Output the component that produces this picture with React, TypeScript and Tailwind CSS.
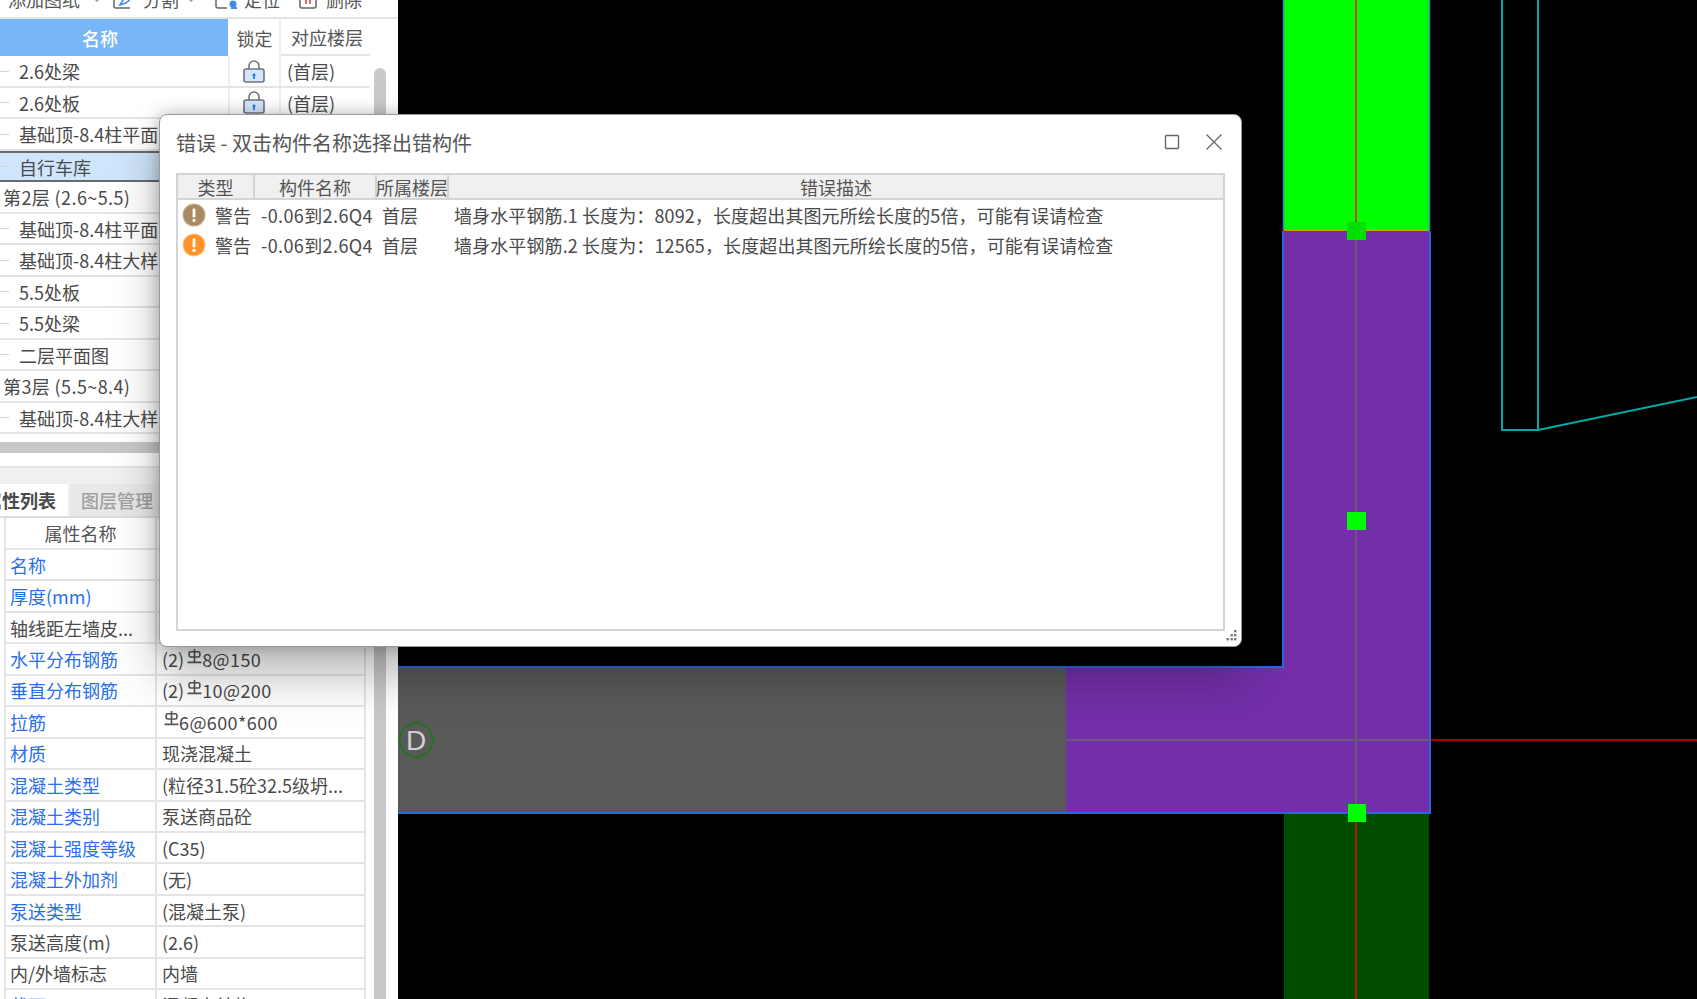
const treeRows = [
  { name: "2.6处梁", indent: true, selected: false },
  { name: "2.6处板", indent: true, selected: false },
  { name: "基础顶-8.4柱平面图", indent: true, selected: false },
  { name: "自行车库", indent: true, selected: true },
  { name: "第2层 (2.6~5.5)", indent: false, selected: false },
  { name: "基础顶-8.4柱平面图", indent: true, selected: false },
  { name: "基础顶-8.4柱大样图", indent: true, selected: false },
  { name: "5.5处板", indent: true, selected: false },
  { name: "5.5处梁", indent: true, selected: false },
  { name: "二层平面图", indent: true, selected: false },
  { name: "第3层 (5.5~8.4)", indent: false, selected: false },
  { name: "基础顶-8.4柱大样图", indent: true, selected: false },
];

// rebar = name is blue, grade = value starts with the rebar symbol
const attrRows: { name: string; blue: boolean; prefix?: string; rebar?: string; value?: string }[] = [
  { name: "名称", blue: true },
  { name: "厚度(mm)", blue: true },
  { name: "轴线距左墙皮...", blue: false },
  { name: "水平分布钢筋", blue: true, prefix: "(2)", rebar: "8@150" },
  { name: "垂直分布钢筋", blue: true, prefix: "(2)", rebar: "10@200" },
  { name: "拉筋", blue: true, prefix: "", rebar: "6@600*600" },
  { name: "材质", blue: true, value: "现浇混凝土" },
  { name: "混凝土类型", blue: true, value: "(粒径31.5砼32.5级坍..." },
  { name: "混凝土类别", blue: true, value: "泵送商品砼" },
  { name: "混凝土强度等级", blue: true, value: "(C35)" },
  { name: "混凝土外加剂", blue: true, value: "(无)" },
  { name: "泵送类型", blue: true, value: "(混凝土泵)" },
  { name: "泵送高度(m)", blue: false, value: "(2.6)" },
  { name: "内/外墙标志", blue: false, value: "内墙" },
  { name: "截面", blue: true, value: "混凝土结构" },
];

const errors = [
  { color: "#a98a62", ring: "#c9b294", desc: "墙身水平钢筋.1 长度为：8092，长度超出其图元所绘长度的5倍，可能有误请检查" },
  { color: "#ff9228", ring: "#ffc48a", desc: "墙身水平钢筋.2 长度为：12565，长度超出其图元所绘长度的5倍，可能有误请检查" },
];

function LockIcon() {
  return (
    <svg width="24" height="24" viewBox="0 0 24 24" fill="none" className="-ml-[2px]">
      <path d="M7 11V7a5 5 0 0 1 10 0v4" stroke="#6d7480" strokeWidth="1.6" />
      <rect x="2" y="10" width="20" height="13" rx="2" fill="#d5e6fb" stroke="#6d7480" strokeWidth="1.6" />
      <path d="M12 14l2.2 2.4h-1.3V20h-1.8v-3.6H9.8z" fill="#1f7ae0" />
    </svg>
  );
}

function RebarSymbol() {
  return (
    <svg width="15" height="15" viewBox="0 0 14 14" fill="none" className="mb-[6px] shrink-0" stroke="#555" strokeWidth="1.5">
      <rect x="2" y="2.5" width="10" height="5" rx="1.5" />
      <path d="M7 0v12M0.5 12.5h13" />
    </svg>
  );
}

function WarnIcon({ color, ring }: { color: string; ring: string }) {
  return (
    <svg width="24" height="24" viewBox="0 0 24 24" className="shrink-0">
      <circle cx="12" cy="12" r="11.5" fill={ring} />
      <circle cx="12" cy="12" r="10.5" fill={color} />
      <rect x="10.6" y="5.5" width="2.8" height="9" rx="1.2" fill="#fff" />
      <circle cx="12" cy="17.3" r="1.6" fill="#fff" />
    </svg>
  );
}

function Toolbar() {
  return (
    <div className="h-[19px] overflow-hidden border-b-2 border-[#e4e4e4] shrink-0">
      <div className="flex items-start -mt-[10px] h-[18px] leading-[18px] whitespace-nowrap text-[#555]">
        <span className="ml-[8px]">添加图纸</span>
        <span className="ml-[13px] mt-[8px] w-0 h-0 border-x-[4px] border-x-transparent border-t-[4px] border-t-[#999]" />
        <svg width="24" height="20" viewBox="0 0 24 20" fill="none" className="ml-[12px]">
          <path d="M1 5v11a2 2 0 0 0 2 2h14" stroke="#666" strokeWidth="1.5" />
          <path d="M7 15l3-5 9-8 3 3-9 8z" stroke="#3f8be8" strokeWidth="1.5" />
        </svg>
        <span className="ml-[6px]">分割</span>
        <span className="ml-[8px] mt-[8px] w-0 h-0 border-x-[4px] border-x-transparent border-t-[4px] border-t-[#999]" />
        <svg width="24" height="20" viewBox="0 0 24 20" fill="none" className="ml-[20px]">
          <path d="M1 4v12a2 2 0 0 0 2 2h9" stroke="#666" strokeWidth="1.5" />
          <circle cx="18" cy="14" r="3.5" fill="#3f8be8" />
          <path d="M16 18h6" stroke="#3f8be8" strokeWidth="2" />
        </svg>
        <span className="ml-[5px]">定位</span>
        <svg width="18" height="20" viewBox="0 0 18 20" fill="none" className="ml-[19px]">
          <path d="M1 4v12a2 2 0 0 0 2 2h12a2 2 0 0 0 2-2V4" stroke="#666" strokeWidth="1.5" />
          <path d="M7 9v5M11 9v5" stroke="#e0483a" strokeWidth="1.6" />
        </svg>
        <span className="ml-[9px]">删除</span>
      </div>
    </div>
  );
}

function TreeTable() {
  return (
    <div className="flex shrink-0 h-[423px]">
      <div className="w-[370px]">
        <div className="flex h-[37px]">
          <div className="w-[228px] bg-[#79b6f8] text-white font-medium flex items-center justify-center pr-[28px]">名称</div>
          <div className="w-[53px] border-r-2 border-[#eeeeee] flex items-center justify-center pl-[2px] text-[#555]">锁定</div>
          <div className="flex-1 border-b-2 border-[#e4e4e4] flex items-center justify-center pl-[3px] text-[#555]">对应楼层</div>
        </div>
        {treeRows.map((row, i) => (
          <div
            key={i}
            className={`flex h-[31.5px] items-center box-border ${row.selected ? "border-y-2 border-[#6a6a6a] bg-[#cfe5fb]" : "border-b-2 border-[#e4e4e4]"}`}
          >
            <div className={`w-[228px] flex items-center overflow-hidden whitespace-nowrap text-[#4a4a4a] pt-[1px] ${row.indent ? "" : "pl-[3px] tracking-[0.4px]"}`}>
              {row.indent && <span className="w-[9px] h-[1px] bg-[#d4d4d4] mr-[10px] shrink-0" />}
              {row.name}
            </div>
            {row.indent && (
              <>
                <div className="w-[53px] h-full border-x-2 border-[#eeeeee] flex items-center justify-center">
                  <LockIcon />
                </div>
                <div className="pl-[6px] pt-[1px] text-[#4a4a4a] whitespace-nowrap">(首层)</div>
              </>
            )}
          </div>
        ))}
      </div>
      <div className="w-[28px] pl-[4px] pt-[49px]">
        <div className="w-[12px] h-[120px] rounded-full bg-[#c9c9c9]" />
      </div>
    </div>
  );
}

function AttrTable() {
  return (
    <div className="flex flex-1 min-h-0 overflow-hidden">
      <div className="w-[366px] pl-[4px]">
        <div className="border-l-2 border-r-2 border-[#e4e4e4]">
          <div className="flex h-[32px] border-b-2 border-[#e4e4e4]">
            <div className="w-[151px] border-r-2 border-[#e4e4e4] flex items-center justify-center text-[#555]">属性名称</div>
            <div className="flex-1" />
          </div>
          {attrRows.map((row) => (
            <div key={row.name} className="flex h-[31.45px] box-border border-b-2 border-[#e4e4e4] items-center whitespace-nowrap">
              <div className={`w-[151px] h-full flex items-center pl-[4px] border-r-2 border-[#e4e4e4] ${row.blue ? "text-[#2a6fe8]" : "text-[#4a4a4a]"}`}>
                {row.name}
              </div>
              <div className="flex-1 pl-[5px] flex items-center text-[#4a4a4a]">
                {row.rebar ? (
                  <>
                    {row.prefix ? <span className="mr-[3px]">{row.prefix}</span> : <span className="w-[2px]" />}
                    <RebarSymbol />
                    <span className="tracking-[0.4px]">{row.rebar}</span>
                  </>
                ) : (
                  row.value
                )}
              </div>
            </div>
          ))}
        </div>
      </div>
      <div className="w-[32px] pl-[8px]">
        <div className="w-[12px] h-full bg-[#c9c9c9]" />
      </div>
    </div>
  );
}

function LeftPanel() {
  return (
    <div className="w-[398px] h-full bg-white flex flex-col shrink-0 overflow-hidden">
      <Toolbar />
      <TreeTable />
      <div className="h-[11px] w-[392px] bg-[#c8c8c8] shrink-0" />
      <div className="h-[15px] border-b-2 border-[#e4e4e4] shrink-0" />
      <div className="h-[16px] bg-[#f0f0f0] shrink-0" />
      <div className="flex h-[34px] shrink-0 bg-[#f0f0f0] border-b-2 border-[#dcdcdc]">
        <div className="w-[68px] bg-white flex items-center justify-end pr-[12px] overflow-hidden whitespace-nowrap font-bold text-[#4a4a4a]">属性列表</div>
        <div className="w-[90px] ml-[2px] bg-[#e9e9e9] flex items-center justify-center pl-[4px] font-medium text-[#a0a0a0] whitespace-nowrap">图层管理</div>
      </div>
      <AttrTable />
    </div>
  );
}

function CadCanvas() {
  return (
    <div className="flex-1 h-full bg-black">
      <svg viewBox="398 0 1299 999" className="block w-full h-full">
        <rect x="1284" y="0" width="145" height="230" fill="#00ff00" />
        <path d="M1283.5 0V230M1429.5 0V230" stroke="#2f8fc0" strokeWidth="1.5" />
        <rect x="398" y="667" width="668" height="146" fill="#595959" />
        <path d="M1066 667H1283V230H1430V813H1066Z" fill="#722fa8" />
        <rect x="1284" y="813" width="145" height="186" fill="#004d00" />
        <path d="M398 667H1283V231M1430 231V813H398" fill="none" stroke="#2a66dc" strokeWidth="2" />
        <path d="M1284 230.5H1429" stroke="#d0a010" strokeWidth="1.2" />
        <path d="M1356 0V222" stroke="#c04a10" strokeWidth="2" />
        <path d="M1356 822V999" stroke="#a81c00" strokeWidth="2" />
        <path d="M1356 240V804M1066 740H1430" stroke="#666666" strokeWidth="1.5" />
        <path d="M1431 740H1697" stroke="#a80000" strokeWidth="2" />
        <rect x="1347" y="222" width="19" height="18" fill="#00e000" />
        <rect x="1347" y="512" width="19" height="18" fill="#00ff00" />
        <rect x="1348" y="804" width="18" height="18" fill="#00ff00" />
        <path d="M1502 0V430H1538V0M1538 430L1697 397" fill="none" stroke="#00a8a8" strokeWidth="2" />
        <polygon points="416,722 428,727 434,740 428,753 416,758 404,753 399,740 404,727" fill="none" stroke="#0f7a0f" strokeWidth="1.6" />
        <text x="416" y="750" textAnchor="middle" fontSize="28" fill="#d0d0d0" fontFamily="'Liberation Sans', sans-serif">D</text>
      </svg>
    </div>
  );
}

function ErrorDialog() {
  return (
    <div className="absolute left-[159px] top-[114px] w-[1083px] h-[533px] rounded-[8px] bg-white border border-[#9a9a9a] shadow-[0_28px_48px_rgba(0,0,0,0.28),0_0_16px_rgba(0,0,0,0.25)] flex flex-col">
      <div className="h-[58px] shrink-0 flex items-center pl-[16px] pr-[18px] pb-[2px]">
        <span className="text-[20px] text-[#555] flex-1">错误 - 双击构件名称选择出错构件</span>
        <svg width="16" height="16" viewBox="0 0 16 16" fill="none" className="mr-[25px] mb-[2px]">
          <rect x="1.5" y="1.5" width="13" height="13" rx="1" stroke="#666" strokeWidth="1.4" />
        </svg>
        <svg width="18" height="18" viewBox="0 0 18 18" fill="none" className="mb-[2px]">
          <path d="M1.5 1.5l15 15M16.5 1.5l-15 15" stroke="#666" strokeWidth="1.3" />
        </svg>
      </div>
      <div className="ml-[16px] mr-[16px] h-[458px] border-2 border-[#d4d4d4] flex flex-col">
        <div className="flex h-[25px] bg-[#f0f0f0] border-b-2 border-[#d4d4d4] text-[#555] whitespace-nowrap shrink-0">
          <div className="w-[77px] border-r-2 border-[#d4d4d4] flex items-center justify-center">类型</div>
          <div className="w-[122px] border-r-2 border-[#d4d4d4] flex items-center justify-center">构件名称</div>
          <div className="w-[72px] border-r-2 border-[#d4d4d4] flex items-center justify-center">所属楼层</div>
          <div className="flex-1 flex items-center justify-center">错误描述</div>
        </div>
        <div>
          {errors.map((e) => (
            <div key={e.desc} className="flex h-[30px] items-center whitespace-nowrap text-[#4a4a4a]">
              <div className="ml-[4px] w-[24px]">
                <WarnIcon color={e.color} ring={e.ring} />
              </div>
              <div className="ml-[9px] w-[46px]">警告</div>
              <div className="w-[121px] tracking-[0.4px]">-0.06到2.6Q4</div>
              <div className="w-[72px]">首层</div>
              <div className="tracking-[0.11px]">{e.desc}</div>
            </div>
          ))}
        </div>
      </div>
      <svg width="14" height="14" viewBox="0 0 14 14" className="absolute right-[3px] bottom-[3px]" fill="#7a7a7a">
        <rect x="10" y="1" width="2.4" height="2.4" />
        <rect x="6.5" y="5" width="2.4" height="2.4" />
        <rect x="10" y="5" width="2.4" height="2.4" />
        <rect x="2.5" y="9" width="2.4" height="2.4" />
        <rect x="6.5" y="9" width="2.4" height="2.4" />
        <rect x="10" y="9" width="2.4" height="2.4" />
      </svg>
    </div>
  );
}

export default function App() {
  return (
    <div className="relative w-[1697px] h-[999px] overflow-hidden flex bg-black text-[18px] leading-[24px] font-['Noto_Sans_CJK_SC','Noto_Sans',sans-serif]">
      <LeftPanel />
      <CadCanvas />
      <ErrorDialog />
    </div>
  );
}
